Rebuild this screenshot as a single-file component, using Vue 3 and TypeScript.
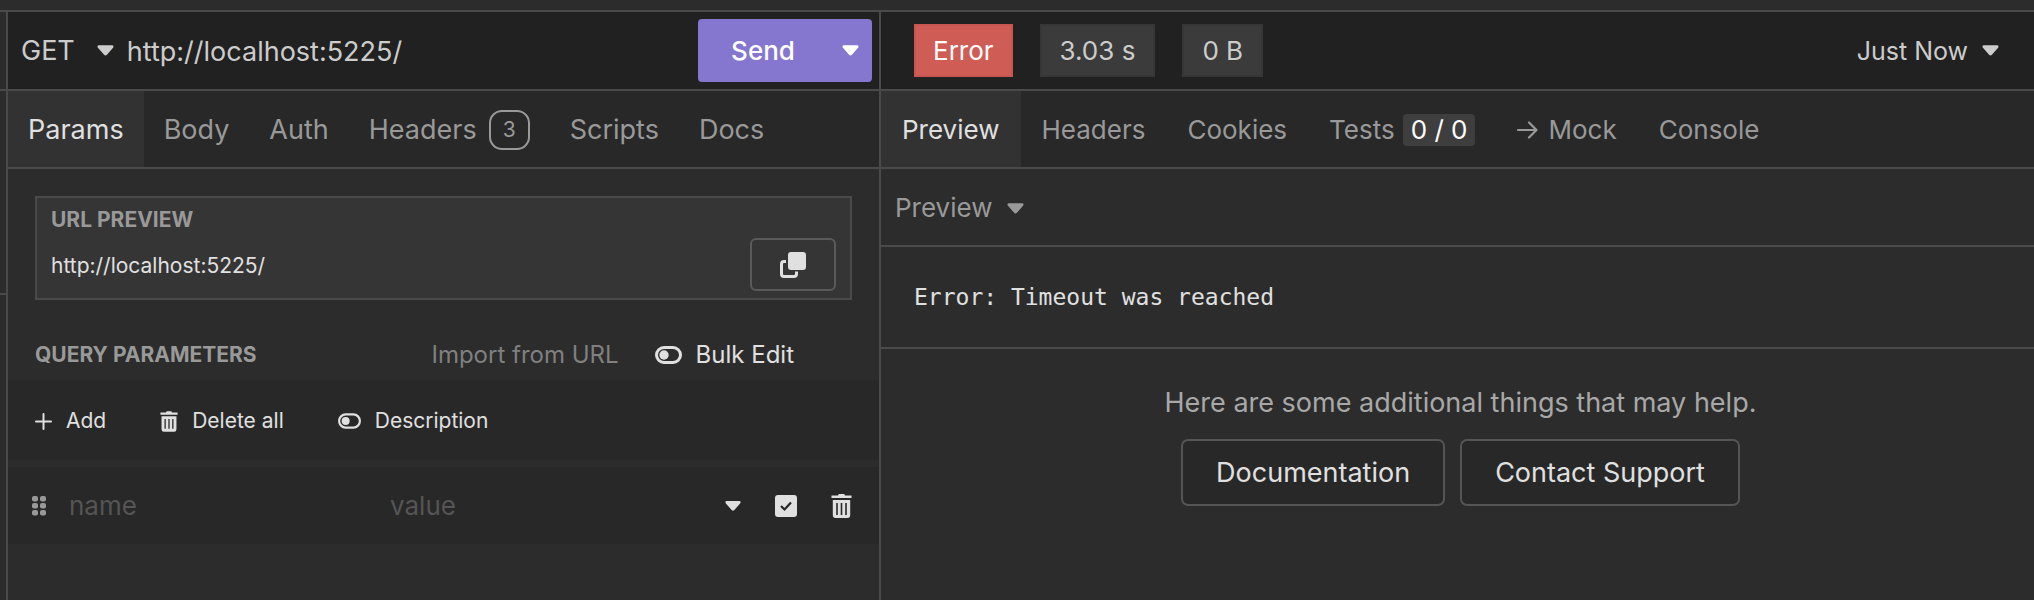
<script setup lang="ts">
import { ref } from 'vue'

interface Tab {
  id: string
  label: string
  count?: number
  score?: string
  arrow?: boolean
}

const requestTabs: Tab[] = [
  { id: 'params', label: 'Params' },
  { id: 'body', label: 'Body' },
  { id: 'auth', label: 'Auth' },
  { id: 'headers', label: 'Headers', count: 3 },
  { id: 'scripts', label: 'Scripts' },
  { id: 'docs', label: 'Docs' },
]

const responseTabs: Tab[] = [
  { id: 'preview', label: 'Preview' },
  { id: 'headers', label: 'Headers' },
  { id: 'cookies', label: 'Cookies' },
  { id: 'tests', label: 'Tests', score: '0 / 0' },
  { id: 'mock', label: 'Mock', arrow: true },
  { id: 'console', label: 'Console' },
]

const method = ref('GET')
const url = ref('http://localhost:5225/')
const requestTab = ref('params')
const responseTab = ref('preview')
const history = ref('Just Now')
const paramName = ref('')
const paramValue = ref('')
const paramEnabled = ref(true)
</script>

<template>
  <div class="app">
    <div class="topstrip"></div>
    <div class="workspace">
      <div class="gutter">
        <div class="gutter-head"></div>
        <div class="gutter-mid"></div>
      </div>

      <section class="pane request" aria-label="Request">
        <form class="bar urlbar" @submit.prevent>
          <label class="picker method">
            <select v-model="method" aria-label="Method">
              <option>GET</option>
              <option>POST</option>
            </select>
            <svg class="caret" viewBox="0 0 18 11" aria-hidden="true"><path d="M2 0H16C17.500 0 18 1.500 17 2.600L10.500 10C9.600 11 8.400 11 7.500 10L1 2.600C0 1.500 .5 0 2 0Z" /></svg>
          </label>
          <input v-model="url" class="url" type="text" aria-label="Request URL" />
          <div class="send">
            <button class="send-main" type="submit">Send</button>
            <button class="send-more" type="button" aria-label="Send options">
              <svg class="caret" viewBox="0 0 18 11" aria-hidden="true"><path d="M2 0H16C17.500 0 18 1.500 17 2.600L10.500 10C9.600 11 8.400 11 7.500 10L1 2.600C0 1.500 .5 0 2 0Z" /></svg>
            </button>
          </div>
        </form>

        <div class="tabs" role="tablist">
          <button
            v-for="tab in requestTabs"
            :key="tab.id"
            class="tab"
            :class="{ active: tab.id === requestTab }"
            role="tab"
            type="button"
            :aria-selected="tab.id === requestTab"
            @click="requestTab = tab.id"
          >
            {{ tab.label }}<span v-if="tab.count" class="count">{{ tab.count }}</span>
          </button>
        </div>

        <div class="preview-box">
          <div class="preview-text">
            <h2 class="caption">URL PREVIEW</h2>
            <p class="preview-url">{{ url }}</p>
          </div>
          <button class="copy" type="button" aria-label="Copy URL">
            <svg viewBox="0 0 26 26" width="26" height="26" aria-hidden="true">
              <rect x="8" y="0" width="18" height="18" rx="3" fill="currentColor" />
              <path d="M6 9.500H4Q1.500 9.500 1.500 12V22Q1.500 24.500 4 24.500H14Q16.500 24.500 16.500 22V19.500" fill="none" stroke="currentColor" stroke-width="3" />
            </svg>
          </button>
        </div>

        <div class="query-head">
          <h2 class="caption">QUERY PARAMETERS</h2>
          <div class="query-actions">
            <button class="link muted" type="button">Import from URL</button>
            <button class="link" type="button">
              <svg class="toggle-lg" viewBox="0 0 27 18" aria-hidden="true">
                <rect x="1.500" y="1.500" width="24" height="15" rx="7.500" fill="none" stroke="currentColor" stroke-width="3" />
                <circle cx="9" cy="9" r="4.700" fill="currentColor" />
              </svg>
              Bulk Edit
            </button>
          </div>
        </div>

        <div class="toolbar">
          <button class="tool" type="button">
            <svg viewBox="0 0 17 17" width="17" height="17" aria-hidden="true"><path d="M8.500 1V16M1 8.500H16" stroke="currentColor" stroke-width="2" stroke-linecap="round" /></svg>
            Add
          </button>
          <button class="tool" type="button">
            <svg viewBox="0 0 21 24" width="18" height="21" aria-hidden="true">
              <path d="M7 1.500L7.800 0H13.200L14 1.500H20.500V4H.5V1.500ZM1.800 6H19.200V21Q19.200 24 16.500 24H4.500Q1.800 24 1.800 21Z" fill="currentColor" />
              <path d="M6 9V20.500M10.500 9V20.500M15 9V20.500" stroke="#282828" stroke-width="1.500" />
            </svg>
            Delete all
          </button>
          <button class="tool" type="button">
            <svg viewBox="0 0 27 18" width="23" height="16" aria-hidden="true">
              <rect x="1.300" y="1.300" width="24.400" height="15.400" rx="7.700" fill="none" stroke="currentColor" stroke-width="2.600" />
              <circle cx="9" cy="9" r="4.700" fill="currentColor" />
            </svg>
            Description
          </button>
        </div>

        <div class="param-row">
          <svg class="grip" viewBox="0 0 14 20" width="14" height="20" aria-hidden="true">
            <g fill="#999">
              <rect x="0" y="0" width="6" height="5.500" rx="2" /><rect x="8" y="0" width="6" height="5.500" rx="2" />
              <rect x="0" y="7" width="6" height="5.500" rx="2" /><rect x="8" y="7" width="6" height="5.500" rx="2" />
              <rect x="0" y="14" width="6" height="5.500" rx="2" /><rect x="8" y="14" width="6" height="5.500" rx="2" />
            </g>
          </svg>
          <input v-model="paramName" class="field" type="text" placeholder="name" aria-label="Parameter name" />
          <input v-model="paramValue" class="field" type="text" placeholder="value" aria-label="Parameter value" />
          <div class="row-actions">
            <button class="icon" type="button" aria-label="Parameter type">
              <svg viewBox="0 0 18 11" width="16" height="10" aria-hidden="true"><path fill="currentColor" d="M2 0H16C17.500 0 18 1.500 17 2.600L10.500 10C9.600 11 8.400 11 7.500 10L1 2.600C0 1.500 .5 0 2 0Z" /></svg>
            </button>
            <label class="check">
              <input v-model="paramEnabled" type="checkbox" aria-label="Enabled" />
              <svg v-if="paramEnabled" viewBox="0 0 22 22" aria-hidden="true"><path d="M6 11L9.500 14.500L16 7.500" fill="none" stroke="#282828" stroke-width="2.200" /></svg>
            </label>
            <button class="icon" type="button" aria-label="Delete parameter">
              <svg viewBox="0 0 21 24" width="21" height="24" aria-hidden="true">
                <path d="M7 1.500L7.800 0H13.200L14 1.500H20.500V4H.5V1.500ZM1.800 6H19.200V21Q19.200 24 16.500 24H4.500Q1.800 24 1.800 21Z" fill="currentColor" />
                <path d="M6 9V21M10.500 9V21M15 9V21" stroke="#282828" stroke-width="1.600" />
              </svg>
            </button>
          </div>
        </div>
      </section>

      <section class="pane response" aria-label="Response">
        <div class="bar status">
          <span class="badge error">Error</span>
          <span class="badge">3.03 s</span>
          <span class="badge">0 B</span>
          <label class="picker history">
            <select v-model="history" aria-label="Response history">
              <option>Just Now</option>
            </select>
            <svg class="caret" viewBox="0 0 18 11" aria-hidden="true"><path d="M2 0H16C17.500 0 18 1.500 17 2.600L10.500 10C9.600 11 8.400 11 7.500 10L1 2.600C0 1.500 .5 0 2 0Z" /></svg>
          </label>
        </div>

        <div class="tabs response-tabs" role="tablist">
          <button
            v-for="tab in responseTabs"
            :key="tab.id"
            class="tab"
            :class="{ active: tab.id === responseTab }"
            role="tab"
            type="button"
            :aria-selected="tab.id === responseTab"
            @click="responseTab = tab.id"
          >
            <svg v-if="tab.arrow" class="arrow" viewBox="0 0 21 18" width="21" height="18" aria-hidden="true"><path d="M1 9H19.500M12 1.500L19.500 9L12 16.500" fill="none" stroke="currentColor" stroke-width="2.200" stroke-linecap="round" stroke-linejoin="round" /></svg>{{ tab.label }}<span v-if="tab.score" class="score">{{ tab.score }}</span>
          </button>
        </div>

        <div class="mode">
          <button class="mode-button" type="button">
            Preview
            <svg class="caret" viewBox="0 0 18 11" aria-hidden="true"><path d="M2 0H16C17.500 0 18 1.500 17 2.600L10.500 10C9.600 11 8.400 11 7.500 10L1 2.600C0 1.500 .5 0 2 0Z" /></svg>
          </button>
        </div>

        <pre class="message">Error: Timeout was reached</pre>

        <div class="help">
          <p>Here are some additional things that may help.</p>
          <div class="help-links">
            <a class="help-link" href="#documentation">Documentation</a>
            <a class="help-link" href="#support">Contact Support</a>
          </div>
        </div>
      </section>
    </div>
  </div>
</template>

<style>
body {
  margin: 0;
  background: #2c2c2c;
}
</style>

<style scoped>
* {
  box-sizing: border-box;
}

.app {
  display: flex;
  flex-direction: column;
  min-height: 100vh;
  background: #2c2c2c;
  color: #e0e0e0;
  font-family: Inter, "Liberation Sans", sans-serif;
  font-size: 27px;
  line-height: 32px;
}

button,
input,
select {
  margin: 0;
  padding: 0;
  border: 0;
  background: none;
  color: inherit;
  font: inherit;
}

h2,
p,
pre {
  margin: 0;
}

svg {
  display: block;
  flex: none;
}

.topstrip {
  height: 12px;
  border-bottom: 2px solid #4a4a4a;
}

.workspace {
  flex: 1;
  display: grid;
  grid-template-columns: 8px 873fr 1153fr;
}

.gutter {
  border-right: 2px solid #4a4a4a;
}

.gutter-head {
  height: 79px;
  border-bottom: 2px solid #4a4a4a;
}

.gutter-mid {
  height: 204px;
  border-bottom: 2px solid #4a4a4a;
}

.pane {
  min-width: 0;
}

.request {
  border-right: 2px solid #4a4a4a;
}

.bar {
  display: flex;
  align-items: center;
  height: 79px;
  border-bottom: 2px solid #4a4a4a;
  background: #212121;
  color: #ccc;
}

.picker {
  display: flex;
  align-items: center;
}

.picker select {
  appearance: none;
  field-sizing: content;
}

.caret {
  width: 17px;
  height: 11px;
  fill: currentColor;
}

.urlbar {
  padding: 0 7px 0 13px;
}

.method {
  gap: 22px;
}

.url {
  flex: 1;
  min-width: 0;
  margin-left: 13px;
  padding-top: 2px;
  outline: none;
}

.send {
  display: flex;
  height: 63px;
  border-radius: 4px;
  background: #8577cf;
  color: #fff;
}

.send-main {
  width: 130px;
  font-size: 26px;
  font-weight: 500;
}

.send-more {
  display: flex;
  align-items: center;
  justify-content: center;
  width: 44px;
}

.tabs {
  display: flex;
  height: 78px;
  border-bottom: 2px solid #4a4a4a;
  background: #282828;
}

.tab {
  display: flex;
  align-items: center;
  padding: 2px 20px 0;
  color: #999;
  white-space: nowrap;
}

.tab.active {
  background: #323232;
  color: #e0e0e0;
}

.response-tabs {
  font-size: 26px;
}

.response-tabs .tab {
  padding: 2px 21px 0;
}

.count {
  width: 41px;
  height: 40px;
  margin-left: 12px;
  border: 2px solid #999;
  border-radius: 13px;
  font-size: 21px;
  line-height: 36px;
  text-align: center;
}

.score {
  margin-left: 8px;
  padding: 0 8px;
  border-radius: 4px;
  background: #3e3e3e;
  color: #fff;
}

.arrow {
  margin-right: 10px;
}

.preview-box {
  display: flex;
  align-items: flex-end;
  justify-content: space-between;
  height: 104px;
  margin: 27px 27px 0;
  padding: 0 14px 7px;
  border: 2px solid #4a4a4a;
  background: #353535;
}

.preview-text {
  align-self: flex-start;
  padding-top: 7px;
}

.caption {
  color: #999;
  font-size: 21px;
  font-weight: 700;
  line-height: 30px;
}

.preview-url {
  margin-top: 16px;
  font-size: 21px;
  line-height: 30px;
}

.copy {
  display: flex;
  align-items: center;
  justify-content: center;
  width: 86px;
  height: 53px;
  border: 2px solid #5a5a5a;
  border-radius: 6px;
}

.query-head {
  display: flex;
  align-items: center;
  justify-content: space-between;
  height: 80px;
  padding: 30px 85px 0 27px;
}

.query-actions {
  display: flex;
  gap: 36px;
}

.link {
  display: flex;
  align-items: center;
  gap: 14px;
  font-size: 24px;
}

.link.muted {
  color: #808080;
}

.toggle-lg {
  width: 27px;
  height: 18px;
}

.toolbar {
  display: flex;
  align-items: center;
  gap: 54px;
  height: 80px;
  padding: 2px 27px 0;
  background: #282828;
}

.tool {
  display: flex;
  align-items: center;
  gap: 14px;
  font-size: 21px;
}

.param-row {
  display: flex;
  align-items: center;
  height: 77px;
  margin-top: 7px;
  padding: 0 27px 0 24px;
  background: #282828;
}

.grip {
  margin-right: 23px;
}

.field {
  flex: 1;
  min-width: 0;
  font-size: 26px;
}

.field::placeholder {
  color: #555;
  opacity: 1;
}

.row-actions {
  display: flex;
  align-items: center;
  gap: 34px;
  margin-left: 14px;
}

.check {
  display: grid;
  width: 22px;
  height: 22px;
}

.check input,
.check svg {
  grid-area: 1 / 1;
  width: 22px;
  height: 22px;
}

.check input {
  appearance: none;
  border-radius: 3px;
  background: #e0e0e0;
}

.check svg {
  pointer-events: none;
}

.status {
  gap: 27px;
  padding: 0 35px 0 33px;
}

.badge {
  height: 53px;
  padding: 0 18px;
  border: 2px solid #363636;
  background: #3b3b3b;
  font-size: 26px;
  line-height: 49px;
}

.badge.error {
  padding: 0 17px;
  border-color: #c85650;
  background: #d05c56;
  color: #fff;
}

.history {
  gap: 14px;
  margin-left: auto;
  font-size: 25px;
}

.mode {
  display: flex;
  align-items: center;
  height: 78px;
  padding: 2px 14px 0;
  border-bottom: 2px solid #4a4a4a;
  color: #999;
}

.mode-button {
  display: flex;
  align-items: center;
  gap: 14px;
  font-size: 26px;
}

.message {
  padding: 34px 33px;
  border-bottom: 2px solid #4a4a4a;
  font-family: "DejaVu Sans Mono", monospace;
  font-size: 23px;
  line-height: 32px;
}

.help {
  padding: 38px 0 0 6px;
  color: #a8a8a8;
  text-align: center;
}

.help-links {
  display: flex;
  justify-content: center;
  gap: 15px;
  margin-top: 20px;
}

.help-link {
  height: 67px;
  padding: 0 33px;
  border: 2px solid #555;
  border-radius: 7px;
  background: #282828;
  color: #e0e0e0;
  line-height: 63px;
  text-decoration: none;
}
</style>
